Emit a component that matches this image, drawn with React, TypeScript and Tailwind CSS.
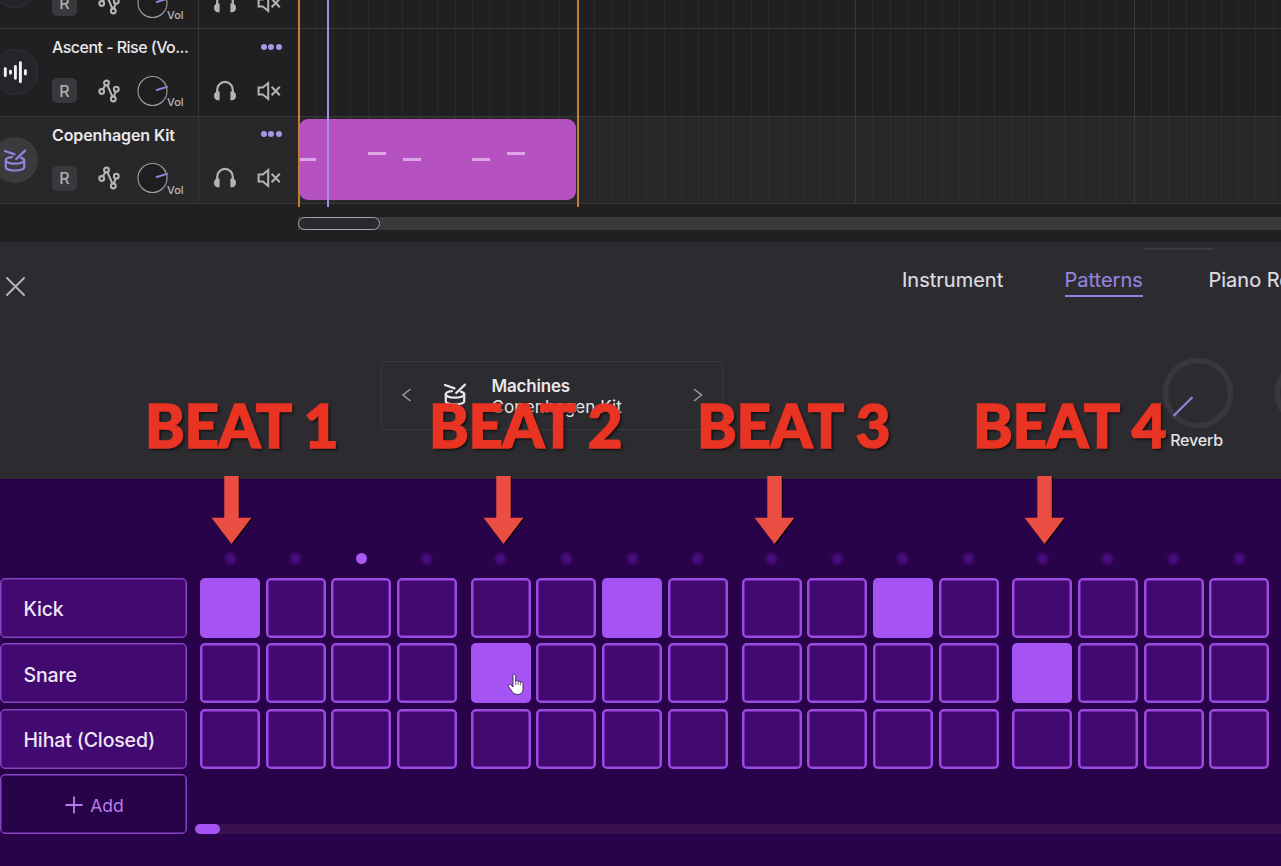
import React from "react";

const sans = "font-['Inter','Liberation_Sans',sans-serif]";

function DrumIcon({ className }: { className: string }) {
  return (
    <svg className={className} viewBox="0 0 24 24" fill="none" stroke="currentColor" strokeWidth="2.2" strokeLinecap="round">
      <path d="M2 3 11.500 6.400M22 2.600 13.200 11" />
      <path d="M9 9.200C5.200 9.600 2.800 10.800 2.800 12.300c0 1.900 4.100 3.300 9.200 3.300s9.200-1.400 9.200-3.300c0-1.200-1.300-2.100-3.400-2.700" />
      <path d="M2.800 12.200v7c0 1.900 4.100 3.300 9.200 3.300s9.200-1.400 9.200-3.300v-7" />
    </svg>
  );
}

function WaveIcon() {
  return (
    <svg className="h-[24px] w-[24px]" viewBox="0 0 24 24" stroke="#f0eff2" strokeWidth="2.900" strokeLinecap="round" fill="none">
      <path d="M2.300 8.600v7.200M7.500 11.200v2M12.400 6.500v11.700M17.400 2.600v19.200M22.400 10.600v3.400" />
    </svg>
  );
}

function AutomationIcon() {
  return (
    <svg className="h-[24px] w-[22px]" viewBox="0 0 22 24" fill="none" stroke="#b4b3b6" strokeWidth="2.100">
      <circle cx="3.700" cy="12.500" r="2.400" />
      <circle cx="8.500" cy="4" r="2.400" />
      <circle cx="15.300" cy="20" r="2.400" />
      <circle cx="18.300" cy="10.200" r="2.400" />
      <path d="M4.900 10.200 7.300 6.200M9.500 6.300l4.900 11.300M15.800 17.500l1.900-4.900" />
    </svg>
  );
}

function VolumeKnob() {
  return (
    <svg className="h-[32px] w-[32px]" viewBox="0 0 32 32" fill="none">
      <circle cx="15.500" cy="16" r="14.500" fill="#1e1d20" stroke="#a09fa2" strokeWidth="1.100" />
      <path d="M19 15.200 30.800 11.600" stroke="#9482de" strokeWidth="2" />
    </svg>
  );
}

function HeadphonesIcon() {
  return (
    <svg className="h-[22px] w-[24px]" viewBox="0 0 24 22">
      <path d="M4.200 14V9.700a7.800 7.800 0 0 1 15.600 0V14" fill="none" stroke="#b4b3b6" strokeWidth="2.200" />
      <path d="M6.600 11.500v8.700H4.500C2.300 20.200 1 18 1 15.700s1.500-4.200 3.500-4.200zM17.400 11.500v8.700h2.100c2.200 0 3.500-2.200 3.500-4.500s-1.500-4.200-3.500-4.200z" fill="#b4b3b6" />
    </svg>
  );
}

function MuteIcon() {
  return (
    <svg className="h-[20px] w-[24px]" viewBox="0 0 24 20" fill="none" stroke="#b4b3b6" strokeWidth="2">
      <path d="M1.600 6.600h4.200l5.400-4.500v15.800l-5.400-4.500H1.600z" />
      <path d="m14.600 5.800 8.200 8.400M22.800 5.800l-8.200 8.400" />
    </svg>
  );
}

function Track({ name, kind }: { name: string; kind: "wave" | "drum" }) {
  const drum = kind === "drum";
  return (
    <div className={`flex h-[87.5px] shrink-0 border-b border-[#38383b] ${drum ? "bg-[#28272a]" : "bg-[#202022]"}`}>
      <div className="flex w-[197.5px] shrink-0">
        <div className="-ml-2 mt-[19.5px] flex h-[47px] w-[46px] shrink-0 items-center justify-center">
          <div className={`flex h-[46px] w-[46px] items-center justify-center rounded-full ${drum ? "bg-[#3b3a3d]" : "border border-[#333236] bg-[#252428]"}`}>
            {drum ? <DrumIcon className="h-[24px] w-[24px] text-[#9482de]" /> : <WaveIcon />}
          </div>
        </div>
        <div className="ml-[14px] flex flex-col pt-[7px]">
          <div className={`h-[22px] whitespace-nowrap text-[16px] leading-[22px] text-[#e9e8ea] ${drum ? "font-semibold tracking-[-0.1px]" : "font-medium tracking-[-0.53px]"}`}>{name}</div>
          <div className="mt-[16.500px] flex h-[32px] items-center">
            <div className="flex h-[25px] w-[25px] items-center justify-center rounded-[5px] bg-[#39383c] text-[16px] font-medium text-[#aeadb0]">R</div>
            <div className="ml-[21px]"><AutomationIcon /></div>
            <div className="ml-[17px]"><VolumeKnob /></div>
            <div className="-ml-[2px] mt-[24px] text-[11px] font-medium leading-none text-[#bbbabd]">Vol</div>
          </div>
        </div>
      </div>
      <div className="flex w-[100.5px] shrink-0 flex-col border-l border-[#343437]">
        <div className="flex h-[35px] items-center justify-end gap-[1.500px] pr-[16.500px]">
          {[0, 1, 2].map((d) => <span key={d} className="h-[6px] w-[6px] rounded-full bg-[#a796e6]" />)}
        </div>
        <div className="mt-[15.500px] flex h-[22px] items-center pl-[14px]">
          <HeadphonesIcon />
          <div className="ml-[20px]"><MuteIcon /></div>
        </div>
      </div>
      <div className="flex min-w-0 flex-1 overflow-hidden">
        {Array.from({ length: 58 }, (_, i) => (
          <div key={i} className={`w-[17.420px] shrink-0 border-l ${i % 16 === 0 ? "border-[#38383b]" : drum ? "border-[#2f2e31]" : "border-[#29292b]"}`} />
        ))}
      </div>
    </div>
  );
}

const notes = [
  "left-0 top-[39px] w-[17px]",
  "left-[69px] top-[33.500px] w-[17.500px]",
  "left-[104px] top-[39px] w-[17.500px]",
  "left-[173px] top-[39px] w-[17.500px]",
  "left-[208px] top-[33.500px] w-[17.500px]",
];

function Timeline() {
  return (
    <section className="relative h-[242px] shrink-0 overflow-hidden bg-[#202022]">
      <div className="flex h-[204px] flex-col justify-end overflow-hidden">
        <Track name="Drums" kind="wave" />
        <Track name="Ascent - Rise (Vo..." kind="wave" />
        <Track name="Copenhagen Kit" kind="drum" />
      </div>
      <div className="ml-[298px] mt-[13px] h-[13px] bg-[#3a393c]">
        <div className="h-[13px] w-[82px] rounded-full border border-[#a5a4a7] bg-[#2a292d]" />
      </div>
      <div className="absolute left-[299px] top-[118.500px] h-[81.500px] w-[277px] overflow-hidden rounded-[9px] bg-[#b551c1]">
        {notes.map((n) => <div key={n} className={`absolute h-[3px] bg-[#dda5e3] ${n}`} />)}
      </div>
      <div className="absolute left-[298px] top-0 h-[207px] w-[1.500px] bg-[#c87c36]" />
      <div className="absolute left-[577px] top-0 h-[207px] w-[1.500px] bg-[#c87c36]" />
      <div className="absolute left-[326.500px] top-0 h-[207px] w-[2px] bg-[#a38ce4]" />
    </section>
  );
}

function EffectKnob({ label }: { label: string }) {
  return (
    <div className="flex w-[72px] shrink-0 flex-col items-center">
      <svg className="h-[72px] w-[72px]" viewBox="0 0 72 72" fill="none">
        <circle cx="36" cy="36" r="32.500" stroke="#38373b" strokeWidth="5.500" />
        <path d="M11.500 59 30.500 40" stroke="#9482de" strokeWidth="2.200" />
      </svg>
      <span className="-ml-[3px] text-[16px] font-medium leading-[22px] tracking-[-0.2px] text-[#e4e3e6]">{label}</span>
    </div>
  );
}

function InstrumentPanel() {
  return (
    <section className="h-[236.500px] shrink-0 overflow-hidden bg-[#2c2b2f]">
      <div className="ml-[1143px] mt-[6px] h-[2px] w-[71px] rounded-full bg-[#3a393d]" />
      <div className="flex h-[72px] items-start">
        <svg className="ml-[5px] mt-[26px] h-[21px] w-[21px] shrink-0" viewBox="0 0 21 21" stroke="#b4b3b6" strokeWidth="2" strokeLinecap="round">
          <path d="m2 2 17 17M19 2 2 19" />
        </svg>
        <nav className="ml-[876px] mt-[16px] flex w-[379px] shrink-0 overflow-hidden whitespace-nowrap text-[20px] leading-[28px] text-[#dddce0] [-webkit-text-stroke:0.2px]">
          <span className="w-[162.500px] shrink-0">Instrument</span>
          <span className="h-[31px] w-[78px] shrink-0 border-b-2 border-[#9482de] text-[#9482de]">Patterns</span>
          <span className="ml-[66px] shrink-0">Piano Roll</span>
        </nav>
      </div>
      <div className="mt-[35px] flex overflow-hidden">
        <div className="ml-[380.500px] mt-[4px] flex h-[69px] w-[342px] shrink-0 items-center rounded-[5px] border border-[#3a393d] pb-[1px]">
          <svg className="ml-[19px] h-[14px] w-[12px]" viewBox="0 0 12 14" fill="none" stroke="#97969a" strokeWidth="1.600"><path d="M9.500 1 2 7l7.500 6" /></svg>
          <DrumIcon className="-mt-[2px] ml-[30px] h-[24px] w-[24px] text-[#e9e8ea]" />
          <div className="ml-[25px] mt-[4px] w-[192px] text-[17px] leading-[21.500px] text-[#e9e8ea]">
            <div className="font-semibold tracking-[-0.2px]">Machines</div>
            <div className="tracking-[0.1px]">Copenhagen Kit</div>
          </div>
          <svg className="ml-[8px] h-[14px] w-[12px]" viewBox="0 0 12 14" fill="none" stroke="#97969a" strokeWidth="1.600"><path d="M2 1l7.500 6L2 13" /></svg>
        </div>
        <div className="ml-[439.500px] flex shrink-0 gap-[40px]">
          <EffectKnob label="Reverb" />
          <EffectKnob label="Delay" />
        </div>
      </div>
    </section>
  );
}

const rows: { name: string; on: number[] }[] = [
  { name: "Kick", on: [0, 6, 10] },
  { name: "Snare", on: [4, 12] },
  { name: "Hihat (Closed)", on: [] },
];

function Steps({ children }: { children: (i: number) => React.ReactNode }) {
  return (
    <div className="flex gap-[13.800px]">
      {[0, 1, 2, 3].map((g) => (
        <div key={g} className="flex gap-[5.670px]">
          {[0, 1, 2, 3].map((s) => <div key={s} className="flex w-[60px] justify-center">{children(g * 4 + s)}</div>)}
        </div>
      ))}
    </div>
  );
}

function Sequencer() {
  return (
    <section className="min-h-0 flex-1 overflow-hidden bg-[#290349]">
      <div className="ml-[200px] mt-[74px] flex h-[12px] items-center">
        <Steps>
          {(i) => <span className={`h-[11px] w-[11px] rounded-full ${i === 2 ? "bg-[#ab58f5]" : "bg-[#480c80] blur-[1.500px]"}`} />}
        </Steps>
      </div>
      <div className="mt-[13px] flex flex-col gap-[5.670px]">
        {rows.map((row) => (
          <div key={row.name} className="flex h-[60px]">
            <div className="mr-[13px] flex w-[187px] shrink-0 items-center rounded-[5px] border border-[#8842c4] bg-[#420970] pl-[22.500px] pt-[4px] text-[19.500px] font-medium tracking-[-0.15px] text-[#eee6f5] shadow-[inset_0_0_0_0.5px_#8842c4]">{row.name}</div>
            <Steps>
              {(i) => <div className={`h-[60px] w-[60px] rounded-[5px] ${row.on.includes(i) ? "bg-[#a653f3]" : "border-2 border-[#9c4be2] bg-[#420970] shadow-[inset_0_0_0_0.5px_#9c4be2]"}`} />}
            </Steps>
          </div>
        ))}
        <div className="flex h-[60px] items-end">
          <div className="flex h-[60px] w-[187px] shrink-0 items-center justify-center rounded-[5px] border border-[#8842c4] pl-[2px] pt-[1px] text-[17.500px] text-[#b77de8] shadow-[inset_0_0_0_0.5px_#8842c4]">
            <svg className="mr-[7px] h-[18px] w-[18px]" viewBox="0 0 18 18" stroke="currentColor" strokeWidth="1.800"><path d="M9 .5v17M.5 9h17" /></svg>
            <span className="pt-[2px]">Add</span>
          </div>
          <div className="ml-[8px] h-[10px] flex-1 rounded-l-full bg-[#39114f]">
            <div className="h-[10px] w-[24.500px] rounded-full bg-[#a653f3]" />
          </div>
        </div>
      </div>
    </section>
  );
}

const beats = [
  { label: "BEAT 1", text: "left-[145px]", arrow: "left-[211px]" },
  { label: "BEAT 2", text: "left-[429px]", arrow: "left-[483px]" },
  { label: "BEAT 3", text: "left-[697px]", arrow: "left-[753.500px]" },
  { label: "BEAT 4", text: "left-[973px]", arrow: "left-[1024px]" },
];

function Annotations() {
  return (
    <>
      {beats.map((b) => (
        <React.Fragment key={b.label}>
          <div className={`absolute top-[389px] whitespace-nowrap font-['Lato',sans-serif] text-[60px] font-black leading-[72px] tracking-[-0.4px] text-[#e93323] [-webkit-text-stroke:1.6px_#e93323] [text-shadow:2px_2px_3px_rgba(0,0,0,0.7)] ${b.text}`}>{b.label}</div>
          <svg className={`absolute top-[475px] h-[74px] w-[46px] drop-shadow-[1.5px_1px_0.5px_rgba(0,0,0,0.9)] ${b.arrow}`} viewBox="0 0 46 74" fill="#eb4d42">
            <path d="M13.300 1h14.500v41.700h12.700L20.500 69 .5 42.700h12.800z" />
          </svg>
        </React.Fragment>
      ))}
      <svg className="absolute left-[507px] top-[673px] h-[23px] w-[19px]" viewBox="0 0 19 23">
        <path d="M6 2.800c0-2 2.600-2 2.700 0v5.400c.4-1 2.200-.8 2.400.4.600-.8 2.200-.5 2.300.7.800-.5 2.600 0 2.600 1.400v4.500c0 3.500-1.700 6.300-5.200 6.300-3.200 0-4.900-1.300-6.100-3.500L1.400 13.200c-.5-1.600 1.600-2.300 2.800-1L6 14z" fill="#fff" stroke="#362050" strokeWidth=".9" />
        <path d="M8.700 8v4M11.100 8.600V12M13.400 9.300v3" stroke="#54366f" strokeWidth=".8" />
      </svg>
    </>
  );
}

export default function App() {
  return (
    <main className={`relative flex h-[866px] w-[1281px] flex-col overflow-hidden bg-[#290349] ${sans}`}>
      <Timeline />
      <InstrumentPanel />
      <Sequencer />
      <Annotations />
    </main>
  );
}
